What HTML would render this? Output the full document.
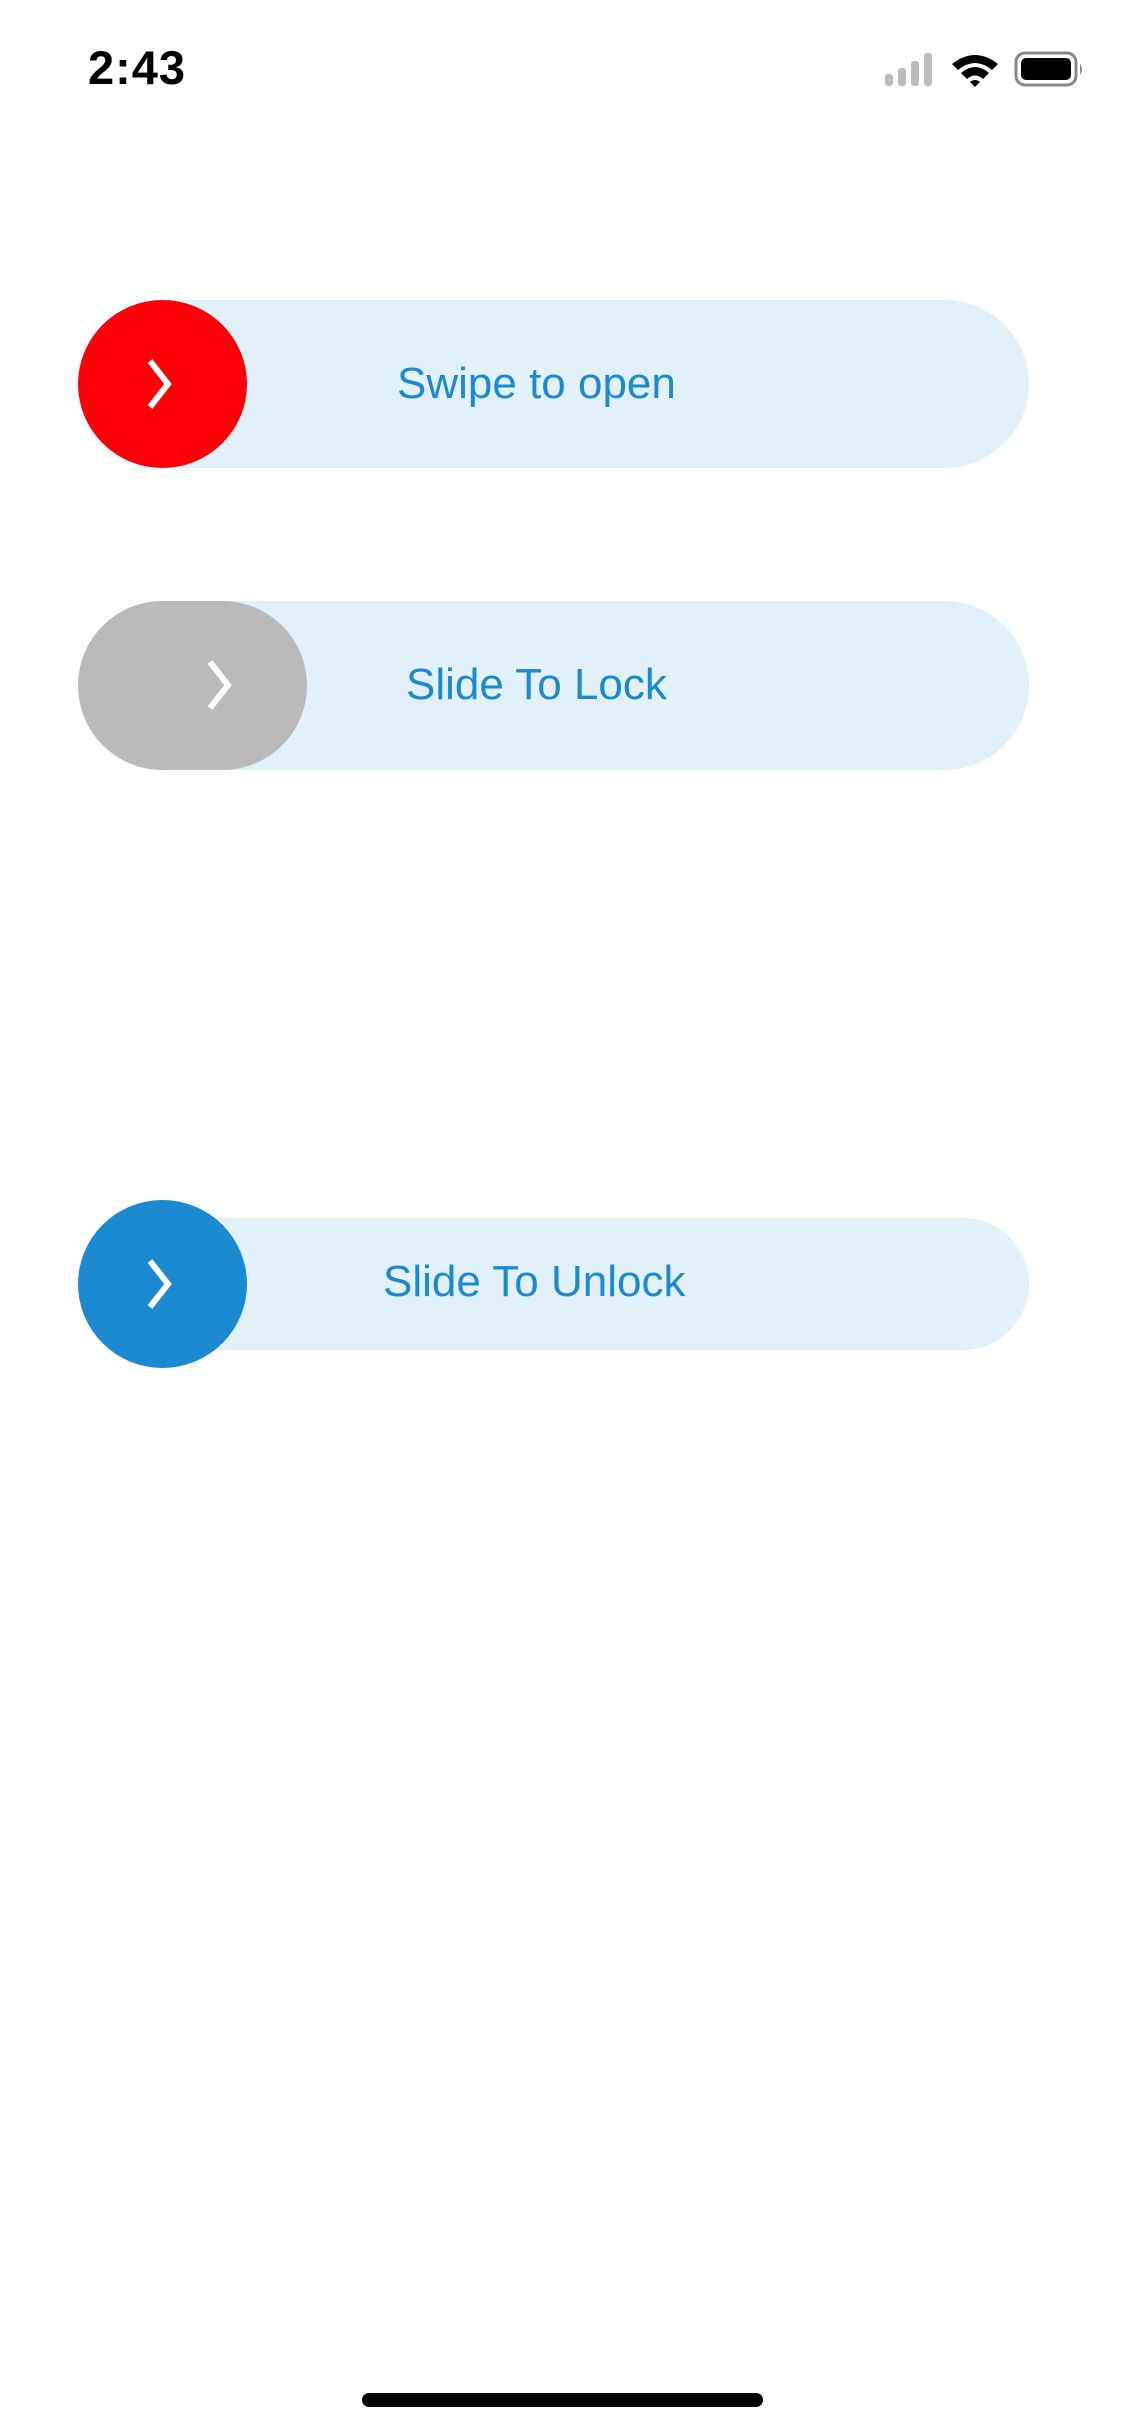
<!DOCTYPE html>
<html><head><style>
body{margin:0;width:1125px;height:2436px;background:#fff;position:relative;overflow:hidden;font-family:"Liberation Sans",sans-serif}
.a{position:absolute}
.track{background:#e2f1f9;border-radius:84px}
.txt{color:#1b8ad0;font-size:44px;white-space:nowrap}
</style></head><body>
<div class="a" style="left:88px;top:40px;font-size:47px;font-weight:bold;letter-spacing:1px">2:43</div>
<svg class="a" style="left:880px;top:50px" width="210" height="40" viewBox="0 0 210 40">
<rect x="5" y="24" width="8" height="12" rx="3" fill="#bbb"/>
<rect x="18" y="18" width="8" height="18" rx="3" fill="#bbb"/>
<rect x="31" y="11" width="8" height="25" rx="3" fill="#bbb"/>
<rect x="44" y="3" width="8" height="33" rx="3" fill="#bbb"/>
<path d="M72 14 Q95 -4 118 14 L112 20 Q95 6 78 20Z" fill="#000"/>
<path d="M81 23 Q95 11 109 23 L103 29 Q95 22 87 29Z" fill="#000"/>
<path d="M90 32 Q95 28 100 32 L95 37Z" fill="#000"/>
<rect x="136" y="3" width="60" height="32" rx="9" fill="none" stroke="#888" stroke-width="3"/>
<rect x="141" y="8" width="50" height="22" rx="5" fill="#000"/>
<path d="M200 14 Q204 19 200 25Z" fill="#888"/>
</svg>

<div class="a track" style="left:78px;top:300px;width:951px;height:168px"></div>
<div class="a" style="left:78px;top:300px;width:169px;height:168px;border-radius:50%;background:#fb0007"></div>
<svg class="a" style="left:140px;top:355px" width="50" height="60"><path d="M10 6 L28 29 L10 52" stroke="#fff" stroke-width="6" fill="none"/></svg>
<div class="a txt" style="left:397px;top:359px">Swipe to open</div>

<div class="a track" style="left:78px;top:601px;width:951px;height:169px"></div>
<div class="a" style="left:78px;top:601px;width:229px;height:169px;border-radius:85px;background:#bababa"></div>
<svg class="a" style="left:200px;top:656px" width="50" height="60"><path d="M10 6 L28 29 L10 52" stroke="#fff" stroke-width="6" fill="none"/></svg>
<div class="a txt" style="left:406px;top:660px">Slide To Lock</div>

<div class="a track" style="left:78px;top:1218px;width:951px;height:132px;border-radius:66px"></div>
<div class="a" style="left:78px;top:1200px;width:169px;height:168px;border-radius:50%;background:#1b8ad0"></div>
<svg class="a" style="left:140px;top:1255px" width="50" height="60"><path d="M10 6 L28 29 L10 52" stroke="#fff" stroke-width="6" fill="none"/></svg>
<div class="a txt" style="left:383px;top:1257px">Slide To Unlock</div>

<div class="a" style="left:362px;top:2393px;width:401px;height:14px;border-radius:7px;background:#000"></div>
</body></html>
